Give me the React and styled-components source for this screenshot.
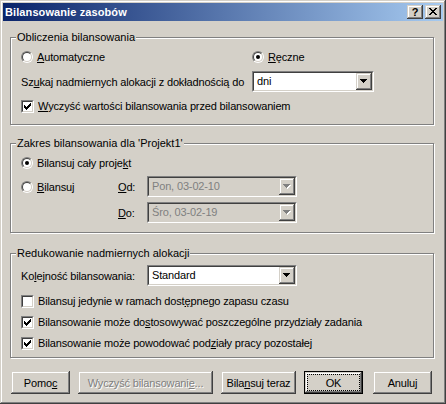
import styled, { createGlobalStyle } from "styled-components";

const GlobalStyle = createGlobalStyle`
  html, body {
    margin: 0;
    padding: 0;
    background: #d4d0c8;
  }
  body {
    font-family: "Liberation Sans", Arial, sans-serif;
    font-size: 11px;
    color: #000;
  }
`;

const raised = `
  box-shadow: inset -1px -1px #404040, inset 1px 1px #d4d0c8,
    inset -2px -2px #808080, inset 2px 2px #fff;
`;

const Window = styled.div`
  width: 446px;
  height: 404px;
  box-sizing: border-box;
  padding: 3px;
  background: #d4d0c8;
  ${raised}
  display: flex;
  flex-direction: column;
`;

const TitleBar = styled.div`
  height: 18px;
  flex: none;
  display: flex;
  align-items: center;
  justify-content: space-between;
  padding: 0 2px 0 2px;
  background: linear-gradient(to right, #0a246a, #a6caf0);
`;

const TitleText = styled.span`
  color: #fff;
  font-weight: bold;
  font-size: 11px;
  letter-spacing: 0.1px;
`;

const TitleButtons = styled.div`
  display: flex;
  gap: 2px;
`;

const TitleButton = styled.span`
  width: 16px;
  height: 14px;
  box-sizing: border-box;
  background: #d4d0c8;
  ${raised}
  display: flex;
  align-items: center;
  justify-content: center;
  font-weight: bold;
  font-size: 11px;
  line-height: 14px;
  padding-bottom: 1px;
`;

const Body = styled.div`
  flex: 1;
  display: flex;
  flex-direction: column;
  padding: 10px 9px 0 7px;
`;

const GroupBox = styled.fieldset`
  margin: ${(p) => p.$top || 0}px 0 0 0;
  padding: 0;
  min-width: 0;
  border: 1px solid #808080;
  box-shadow: inset 1px 1px #fff, 1px 1px #fff;
`;

const Legend = styled.legend`
  margin-left: 5px;
  padding: 0 1px;
  line-height: 13px;
  background: #d4d0c8;
`;

const Grid = styled.div`
  display: grid;
  grid-template-columns: ${(p) => p.$cols};
  row-gap: ${(p) => p.$gap}px;
  align-items: center;
  padding: ${(p) => p.$pad};
`;

const Row = styled.div`
  display: flex;
  align-items: center;
  height: ${(p) => p.$h || 16}px;
  margin-top: ${(p) => p.$mt || 0}px;
  grid-column: ${(p) => p.$span || "auto"};
`;

const Text = styled.span`
  white-space: nowrap;
  letter-spacing: -0.15px;
  color: ${(p) => (p.$disabled ? "#808080" : "#000")};
`;

const U = styled.span`
  text-decoration: underline;
  text-underline-offset: 1px;
`;

const RadioOuter = styled.span`
  width: 12px;
  height: 12px;
  box-sizing: border-box;
  border-radius: 50%;
  border: 1px solid;
  border-color: #808080 #fff #fff #808080;
  display: inline-flex;
  flex: none;
  margin-right: 4px;
`;

const RadioInner = styled.span`
  flex: 1;
  border-radius: 50%;
  border: 1px solid;
  border-color: #404040 #d4d0c8 #d4d0c8 #404040;
  background: #fff;
  display: flex;
  align-items: center;
  justify-content: center;
`;

const RadioDot = styled.span`
  width: 4px;
  height: 4px;
  border-radius: 50%;
  background: #000;
`;

const CheckOuter = styled.span`
  width: 13px;
  height: 13px;
  box-sizing: border-box;
  border: 1px solid;
  border-color: #808080 #fff #fff #808080;
  display: inline-flex;
  flex: none;
  margin-right: 4px;
`;

const CheckInner = styled.span`
  flex: 1;
  border: 1px solid;
  border-color: #404040 #d4d0c8 #d4d0c8 #404040;
  background: #fff;
  display: flex;
  align-items: center;
  justify-content: center;
`;

const ComboBox = styled.div`
  width: ${(p) => p.$w}px;
  height: 21px;
  box-sizing: border-box;
  border: 1px solid;
  border-color: #808080 #fff #fff #808080;
  display: flex;
`;

const ComboInner = styled.div`
  flex: 1;
  display: flex;
  border: 1px solid;
  border-color: #404040 #d4d0c8 #d4d0c8 #404040;
  background: ${(p) => (p.$disabled ? "#d4d0c8" : "#fff")};
`;

const ComboValue = styled.span`
  flex: 1;
  padding-left: 3px;
  line-height: 17px;
  letter-spacing: -0.15px;
  color: ${(p) => (p.$disabled ? "#808080" : "#000")};
`;

const ComboButton = styled.span`
  width: 16px;
  flex: none;
  background: #d4d0c8;
  ${raised}
  display: flex;
  align-items: center;
  justify-content: center;
`;

const ButtonRow = styled.div`
  display: flex;
  gap: 8px;
  margin-top: 13px;
  padding-left: 1px;
`;

const Button = styled.div`
  width: ${(p) => p.$w}px;
  height: 23px;
  box-sizing: border-box;
  background: #d4d0c8;
  ${raised}
  ${(p) => (p.$default ? "border: 1px solid #000; padding: 2px;" : "padding: 3px;")}
  margin-left: ${(p) => p.$ml || 0}px;
  display: flex;
`;

const ButtonFace = styled.span`
  flex: 1;
  display: flex;
  align-items: center;
  justify-content: center;
  letter-spacing: -0.15px;
  white-space: nowrap;
  border: 1px ${(p) => (p.$focus ? "dotted #000" : "solid transparent")};
  color: ${(p) => (p.$disabled ? "#808080" : "#000")};
  text-shadow: ${(p) => (p.$disabled ? "1px 1px #fff" : "none")};
`;

function Radio({ checked, children }) {
  return (
    <Row>
      <RadioOuter>
        <RadioInner>{checked && <RadioDot />}</RadioInner>
      </RadioOuter>
      <Text>{children}</Text>
    </Row>
  );
}

function Check({ checked, children }) {
  return (
    <>
      <CheckOuter>
        <CheckInner>
          {checked && (
            <svg width="7" height="7" viewBox="0 0 7 7" shapeRendering="crispEdges">
              <rect x="6" y="0" width="1" height="1" />
              <rect x="5" y="1" width="2" height="1" />
              <rect x="0" y="2" width="1" height="1" />
              <rect x="4" y="2" width="3" height="1" />
              <rect x="0" y="3" width="2" height="1" />
              <rect x="3" y="3" width="3" height="1" />
              <rect x="0" y="4" width="5" height="1" />
              <rect x="1" y="5" width="3" height="1" />
              <rect x="2" y="6" width="1" height="1" />
            </svg>
          )}
        </CheckInner>
      </CheckOuter>
      <Text>{children}</Text>
    </>
  );
}

function Arrow({ disabled }) {
  const tri = (dx, dy, fill) => (
    <g fill={fill} transform={`translate(${dx} ${dy})`}>
      <rect x="0" y="0" width="7" height="1" />
      <rect x="1" y="1" width="5" height="1" />
      <rect x="2" y="2" width="3" height="1" />
      <rect x="3" y="3" width="1" height="1" />
    </g>
  );
  return (
    <svg width="8" height="5" viewBox="0 0 8 5" shapeRendering="crispEdges">
      {disabled && tri(1, 1, "#fff")}
      {tri(0, 0, disabled ? "#808080" : "#000")}
    </svg>
  );
}

function Combo({ w, value, disabled }) {
  return (
    <ComboBox $w={w}>
      <ComboInner $disabled={disabled}>
        <ComboValue $disabled={disabled}>{value}</ComboValue>
        <ComboButton>
          <Arrow disabled={disabled} />
        </ComboButton>
      </ComboInner>
    </ComboBox>
  );
}

export default function App() {
  return (
    <>
      <GlobalStyle />
      <Window>
        <TitleBar>
          <TitleText>Bilansowanie zasobów</TitleText>
          <TitleButtons>
            <TitleButton>?</TitleButton>
            <TitleButton>
              <svg width="8" height="7" viewBox="0 0 8 7" shapeRendering="crispEdges">
                <path d="M0 0h2v1h-2zM6 0h2v1h-2zM1 1h2v1h-2zM5 1h2v1h-2zM2 2h4v1h-4zM3 3h2v1h-2zM2 4h4v1h-4zM1 5h2v1h-2zM5 5h2v1h-2zM0 6h2v1h-2zM6 6h2v1h-2z" />
              </svg>
            </TitleButton>
          </TitleButtons>
        </TitleBar>

        <Body>
          <GroupBox>
            <Legend>Obliczenia bilansowania</Legend>
            <Grid $cols="231px 122px" $gap={6} $pad="5px 0 10px 10px">
              <Radio>
                <U>A</U>utomatyczne
              </Radio>
              <Radio checked>
                <U>R</U>ęczne
              </Radio>
              <Row $h={21}>
                <Text>
                  Sz<U>u</U>kaj nadmiernych alokacji z dokładnością do
                </Text>
              </Row>
              <Combo w={122} value="dni" />
              <Row $span="1 / span 2">
                <Check checked>
                  <U>W</U>yczyść wartości bilansowania przed bilansowaniem
                </Check>
              </Row>
            </Grid>
          </GroupBox>

          <GroupBox $top={12}>
            <Legend>Zakres bilansowania dla 'Projekt1'</Legend>
            <Grid $cols="97px 29px 150px" $gap={5} $pad="5px 0 9px 10px">
              <Row $span="1 / span 3">
                <Radio checked>
                  Bilansuj cały proje<U>k</U>t
                </Radio>
              </Row>
              <Radio>
                <U>B</U>ilansuj
              </Radio>
              <Text>
                <U>O</U>d:
              </Text>
              <Combo w={150} value="Pon, 03-02-10" disabled />
              <span />
              <Text>
                <U>D</U>o:
              </Text>
              <Combo w={150} value="Śro, 03-02-19" disabled />
            </Grid>
          </GroupBox>

          <GroupBox $top={14}>
            <Legend>Redukowanie nadmiernych alokacji</Legend>
            <Grid $cols="126px 150px" $gap={5} $pad="5px 0 6px 10px">
              <Row $h={21}>
                <Text>
                  Ko<U>l</U>ejność bilansowania:
                </Text>
              </Row>
              <Combo w={150} value="Standard" />
              <Row $span="1 / span 2" $mt={2}>
                <Check>
                  Bilansuj jedynie w ramach dost<U>ę</U>pnego zapasu czasu
                </Check>
              </Row>
              <Row $span="1 / span 2">
                <Check checked>
                  Bilansowanie może do<U>s</U>tosowywać poszczególne przydziały zadania
                </Check>
              </Row>
              <Row $span="1 / span 2">
                <Check checked>
                  Bilansowanie może powodować pod<U>z</U>iały pracy pozostałej
                </Check>
              </Row>
            </Grid>
          </GroupBox>

          <ButtonRow>
            <Button $w={59}>
              <ButtonFace>
                Pomo<U>c</U>
              </ButtonFace>
            </Button>
            <Button $w={135}>
              <ButtonFace $disabled>
                Wyczyść bilansowani<U>e</U>...
              </ButtonFace>
            </Button>
            <Button $w={75}>
              <ButtonFace>
                Bila<U>n</U>suj teraz
              </ButtonFace>
            </Button>
            <Button $w={59} $default>
              <ButtonFace $focus>OK</ButtonFace>
            </Button>
            <Button $w={59} $ml={2}>
              <ButtonFace>Anuluj</ButtonFace>
            </Button>
          </ButtonRow>
        </Body>
      </Window>
    </>
  );
}
